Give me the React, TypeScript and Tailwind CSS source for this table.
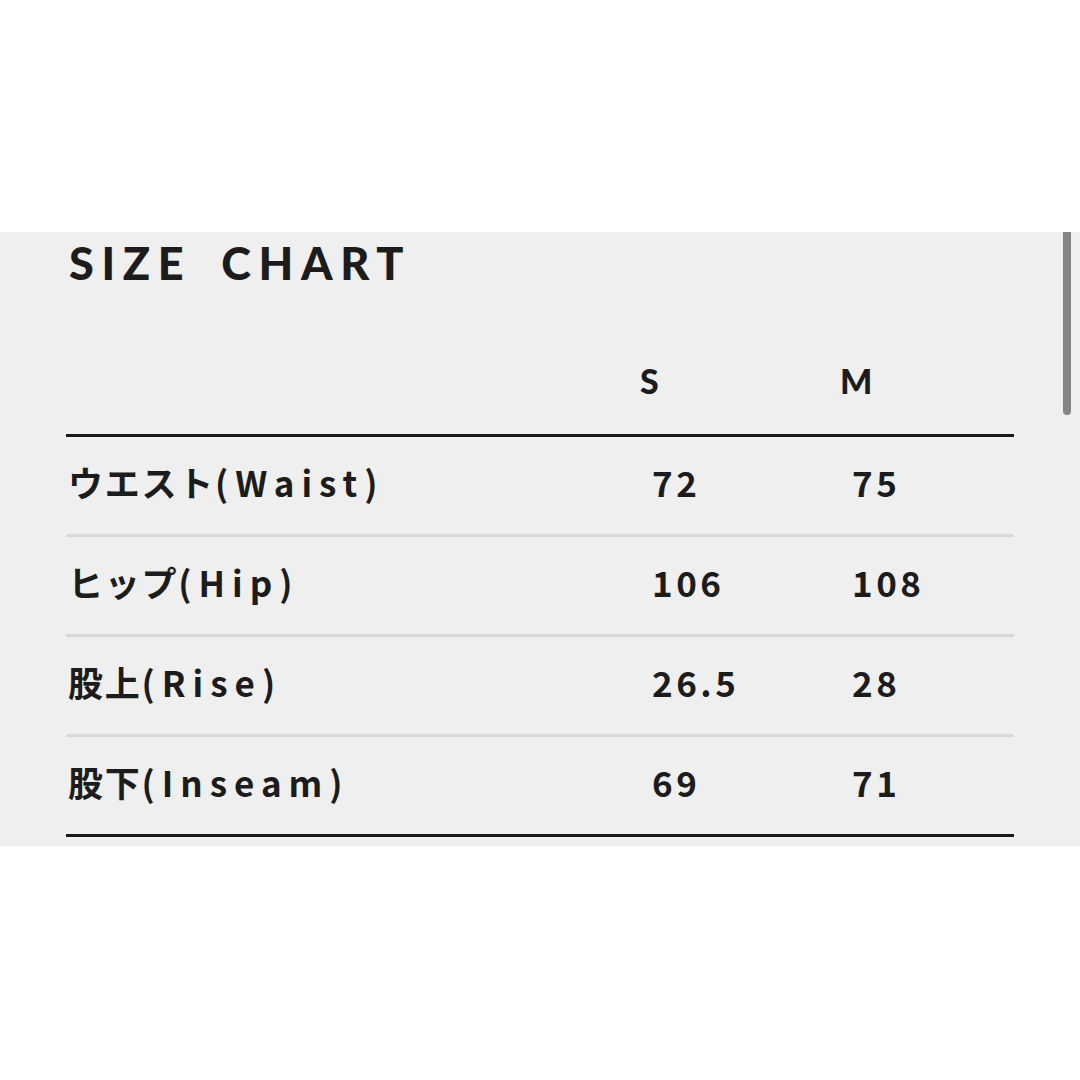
const ROWS = [
  { ja: 'ウエスト', en: '(Waist)', s: '72', m: '75' },
  { ja: 'ヒップ', en: '(Hip)', s: '106', m: '108' },
  { ja: '股上', en: '(Rise)', s: '26.5', m: '28' },
  { ja: '股下', en: '(Inseam)', s: '69', m: '71' },
]

const jp = { fontFamily: '"Noto Sans CJK JP", "Noto Sans", sans-serif' }
const lato = { fontFamily: 'Lato, "Noto Sans", sans-serif' }

export default function App() {
  return (
    <main className="w-[1080px] h-[1080px] bg-white text-[#1c1c1c]">
      <div className="h-[232px]" />
      <section className="relative bg-[#efefef] px-[66px] pb-[9px]">
        <div className="h-[63px] flex items-center pl-[3px]">
          <h1 style={lato} className="text-[45px] font-black tracking-[0.17em] leading-none whitespace-nowrap">
            SIZE<span className="ml-[30px]">CHART</span>
          </h1>
        </div>

        <div style={lato} className="h-[139px] pt-[32px] flex items-center text-[34px] font-black leading-none">
          <div className="w-[574px]" />
          <div className="w-[200px]">S</div>
          <div>M</div>
        </div>

        <div className="border-t-[3px] border-[#1a1a1a]">
          {ROWS.map((r, i) => (
            <div
              key={r.en}
              className={`h-[100px] pb-[9px] flex items-center font-bold text-[35px] leading-none ${
                i < ROWS.length - 1 ? 'border-b-[3px] border-[#d9d9d9]' : 'border-b-[3px] border-[#1a1a1a]'
              }`}
              style={jp}
            >
              <div className="w-[586px] pl-[2px] whitespace-nowrap">
                <span className="tracking-[0.05em]">{r.ja}</span>
                <span className="tracking-[0.2em]">{r.en}</span>
              </div>
              <div className="w-[200px] tracking-[0.1em]">{r.s}</div>
              <div className="tracking-[0.1em]">{r.m}</div>
            </div>
          ))}
        </div>

        <div className="absolute right-[9px] top-0 w-[8px] h-[183px] bg-[#858585] rounded-b-full" />
      </section>
    </main>
  )
}
